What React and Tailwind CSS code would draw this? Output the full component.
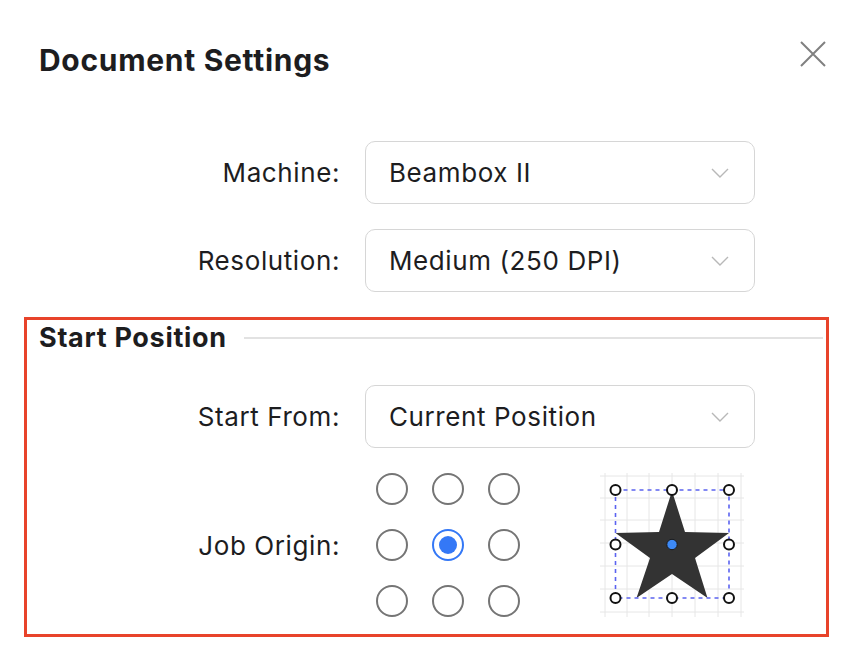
import React from 'react';

const Chevron = () => (
  <svg width="18" height="10" viewBox="0 0 18 10" fill="none">
    <path d="M1 1 L9 9 L17 1" stroke="#b8b8b8" strokeWidth="1.4" />
  </svg>
);

const Select = ({ value }) => (
  <div className="w-[390px] h-[63px] border border-[#d6d6d6] rounded-[10px] flex items-center justify-between pl-[23px] pr-[25px] text-[26px] tracking-[0.6px]">
    <span>{value}</span>
    <Chevron />
  </div>
);

const Row = ({ label, labelWidth, children }) => (
  <div className="flex items-center">
    <div className="text-right text-[26px] tracking-[0.6px]" style={{ width: labelWidth }}>{label}</div>
    <div className="ml-[25px]">{children}</div>
  </div>
);

const Radio = ({ checked }) =>
  checked ? (
    <div className="w-8 h-8 rounded-full border-2 border-[#3478f6] flex items-center justify-center">
      <div className="w-[18px] h-[18px] rounded-full bg-[#3478f6]" />
    </div>
  ) : (
    <div className="w-8 h-8 rounded-full border-2 border-[#757575]" />
  );

const StarPreview = () => {
  const grid = [7, 29, 51, 74, 97, 120, 143];
  const hx = [17.5, 74, 131];
  const hy = [19, 73.5, 127];
  return (
    <svg width="148" height="148" viewBox="0 0 148 148">
      {grid.map((g) => (
        <line key={'v' + g} x1={g} y1="2" x2={g} y2="146" stroke="#e6e6e6" strokeWidth="1" />
      ))}
      {grid.map((g) => (
        <line key={'h' + g} x1="2" y1={g - 2} x2="146" y2={g - 2} stroke="#e6e6e6" strokeWidth="1" />
      ))}
      <polygon
        points="74,20 87,61 131,62 97,87 109.5,127 74,103 38.5,127 52,87 17.5,62 61,61"
        fill="#333333"
      />
      <rect x="17.5" y="19" width="113.5" height="108" fill="none" stroke="#5b63f0" strokeWidth="1.6" strokeDasharray="4 4" />
      {hy.map((y, r) =>
        hx.map((x, c) =>
          r === 1 && c === 1 ? null : (
            <circle key={r + '-' + c} cx={x} cy={y} r="5" fill="#fff" stroke="#111" strokeWidth="2" />
          )
        )
      )}
      <circle cx="74" cy="73.5" r="5.2" fill="#3d8af7" stroke="#1a1a1a" strokeWidth="1" />
    </svg>
  );
};

export default function App() {
  const positions = [0, 1, 2, 3, 4, 5, 6, 7, 8];
  return (
    <div className="w-[860px] h-[650px] bg-white text-[#1d1d1f] font-['Inter','Liberation_Sans',sans-serif] overflow-hidden">
      {/* Header */}
      <div className="flex items-start justify-between pl-[39px] pr-[34px] pt-[38px]">
        <h1 className="text-[30px] font-bold leading-[44px] tracking-[0.7px]">Document Settings</h1>
        <svg width="26" height="26" viewBox="0 0 26 26" className="mt-[3px]">
          <path d="M1 1 L25 25 M25 1 L1 25" stroke="#808080" strokeWidth="2" />
        </svg>
      </div>

      {/* Machine settings */}
      <div className="mt-[59px] flex flex-col gap-[25px]">
        <Row label="Machine:" labelWidth={340}>
          <Select value="Beambox II" />
        </Row>
        <Row label="Resolution:" labelWidth={340}>
          <Select value="Medium (250 DPI)" />
        </Row>
      </div>

      {/* Start position */}
      <div className="mt-[25px] ml-[24px] w-[805px] h-[320px] border-[3px] border-[#e8432a]">
        <div className="flex items-center pl-[12px] pr-[3px] pt-[2px]">
          <span className="text-[27px] font-bold leading-[32px] tracking-[0.7px]">Start Position</span>
          <div className="flex-1 ml-[17px] h-[2px] bg-[#e2e2e2]" />
        </div>
        <div className="mt-[31px]">
          <Row label="Start From:" labelWidth={313}>
            <Select value="Current Position" />
          </Row>
        </div>
        <div className="mt-[23px] flex items-center">
          <div className="w-[313px] text-right text-[26px] tracking-[0.6px]">Job Origin:</div>
          <div className="ml-[36px] grid grid-cols-3 gap-[24px]">
            {positions.map((p) => (
              <Radio key={p} checked={p === 4} />
            ))}
          </div>
          <div className="ml-[78px]">
            <StarPreview />
          </div>
        </div>
      </div>
    </div>
  );
}
